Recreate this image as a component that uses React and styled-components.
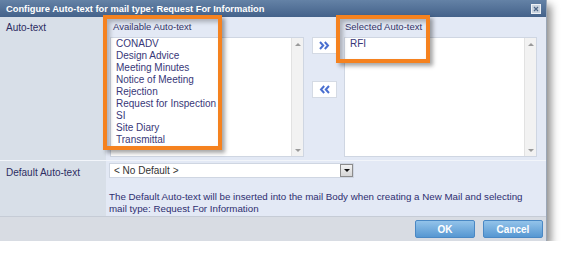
import styled, { createGlobalStyle } from 'styled-components';

const GlobalStyle = createGlobalStyle`
    body {
        margin: 0;
        background: #ffffff;
        font-family: "Liberation Sans", Arial, sans-serif;
    }
`

const Dialog = styled.div`
    width: 546px;
    box-shadow: 4px 5px 8px rgba(0, 0, 0, 0.45);
    border-right: 1px solid #9aa6b6;
    color: #333366;
    font-size: 10px;
`

const TitleBar = styled.div`
    height: 17px;
    display: flex;
    align-items: center;
    justify-content: space-between;
    padding: 0 5px 0 6px;
    background: linear-gradient(#6482a6, #44628a);
    color: #ffffff;
    font-weight: bold;
    font-size: 9.3px;
`

const CloseBox = styled.span`
    display: flex;
    width: 10px;
    height: 10px;
`

const Form = styled.div`
    display: grid;
    grid-template-columns: 106px 1fr;
`

const Label = styled.div`
    background: #d8dfe8;
    padding: ${p => p.$top || 5}px 0 0 6px;
    border-top: ${p => p.$sep ? '1px solid #f2f5fa' : 'none'};
    color: #2d2d62;
`

const Cell = styled.div`
    background: #e3e9f5;
    border-top: ${p => p.$sep ? '1px solid #f2f5fa' : 'none'};
`

const ListsRow = styled.div`
    display: flex;
    align-items: flex-start;
    padding: 0 9px 3px 4px;
    height: 143px;
    box-sizing: border-box;
`

const ListColumn = styled.div`
    position: relative;
    display: flex;
    flex-direction: column;
    width: ${p => p.$w}px;
`

const ListHeader = styled.div`
    height: 20px;
    line-height: 20px;
    padding-left: ${p => p.$pad}px;
    font-size: 9.5px;
`

const ListBox = styled.div`
    height: 120px;
    background: #ffffff;
    border: 1px solid #cfd6e2;
    box-sizing: border-box;
    display: flex;
`

const Items = styled.div`
    flex: 1;
    padding: 0 0 0 5px;
    line-height: 12px;
    color: #383878;
`

const ScrollBar = styled.div`
    width: 11px;
    background: #f2f2f2;
    border-left: 1px solid #e2e2e2;
    display: flex;
    flex-direction: column;
    justify-content: space-between;
    align-items: center;
    padding: 5px 0 4px;
`

const Arrow = styled.span`
    width: 0;
    height: 0;
    border-left: 3px solid transparent;
    border-right: 3px solid transparent;
    ${p => p.$down ? 'border-top: 3px solid #9a9a9a;' : 'border-bottom: 3px solid #9a9a9a;'}
`

const MoveButtons = styled.div`
    display: flex;
    flex-direction: column;
    gap: 27px;
    margin: 20px 7px 0 8px;
`

const MoveButton = styled.button`
    width: 25px;
    height: 17px;
    padding: 0;
    background: #ffffff;
    border: 1px solid #d4dae4;
    display: flex;
    align-items: center;
    justify-content: center;
`

const Highlight = styled.div`
    position: absolute;
    left: ${p => p.$left}px;
    top: -2px;
    width: ${p => p.$w}px;
    height: ${p => p.$h}px;
    border: 4px solid #f5821f;
    box-sizing: border-box;
    box-shadow: 3px 3px 4px rgba(0, 0, 0, 0.35), inset 3px 3px 4px rgba(0, 0, 0, 0.25);
    pointer-events: none;
`

const DefaultRow = styled.div`
    height: 55px;
    padding: 2px 0 0 3px;
    box-sizing: border-box;
`

const Select = styled.div`
    width: 245px;
    height: 15px;
    background: #ffffff;
    border: 1px solid #cfd6e2;
    box-sizing: border-box;
    display: flex;
    align-items: center;
    justify-content: space-between;
    padding-left: 4px;
    color: #333333;
`

const SelectButton = styled.span`
    width: 13px;
    height: 13px;
    box-sizing: border-box;
    background: linear-gradient(#f2f2f2, #d6d6d6);
    border: 1px solid #8c8c8c;
    display: flex;
    align-items: center;
    justify-content: center;
`

const DarkArrow = styled.span`
    width: 0;
    height: 0;
    border-left: 3px solid transparent;
    border-right: 3px solid transparent;
    border-top: 3px solid #111111;
`

const Help = styled.p`
    margin: 13px 0 0;
    line-height: 12px;
    font-size: 9.75px;
    color: #2e2e70;
`

const Footer = styled.div`
    height: 24px;
    background: #d8dce3;
    border-top: 1px solid #c6ccd6;
    display: flex;
    align-items: center;
    justify-content: flex-end;
    gap: 8px;
    padding-right: 3px;
`

const ActionButton = styled.button`
    width: 60px;
    height: 18px;
    padding: 0;
    border: 1px solid #4a88c4;
    border-radius: 2px;
    background: linear-gradient(#93c3ea, #5697d2);
    color: #ffffff;
    font-family: inherit;
    font-weight: bold;
    font-size: 10px;
`

function Chevrons({ left }) {
    return (
        <svg width="11" height="9" viewBox="0 0 11 9">
            <g fill="none" stroke="#4a6fd0" strokeWidth="2" transform={left ? 'translate(11 0) scale(-1 1)' : undefined}>
                <path d="M1 1l3.2 3.5L1 8" />
                <path d="M5.8 1L9 4.5 5.8 8" />
            </g>
        </svg>
    )
}

function List({ items }) {
    return (
        <ListBox>
            <Items>
                {items.map(item => <div key={item}>{item}</div>)}
            </Items>
            <ScrollBar>
                <Arrow />
                <Arrow $down />
            </ScrollBar>
        </ListBox>
    )
}

const available = [
    'CONADV', 'Design Advice', 'Meeting Minutes', 'Notice of Meeting', 'Rejection',
    'Request for Inspection', 'SI', 'Site Diary', 'Transmittal'
]

export default function App() {
    return (
        <>
            <GlobalStyle />
            <Dialog>
                <TitleBar>
                    <span>Configure Auto-text for mail type: Request For Information</span>
                    <CloseBox>
                        <svg width="10" height="10" viewBox="0 0 10 10">
                            <rect x="0.5" y="0.5" width="9" height="9" fill="#c9d3df" stroke="#eef2f7" />
                            <path d="M3 3l4 4M7 3l-4 4" stroke="#4d6688" strokeWidth="1.2" />
                        </svg>
                    </CloseBox>
                </TitleBar>
                <Form>
                    <Label>Auto-text</Label>
                    <Cell>
                        <ListsRow>
                            <ListColumn $w={194}>
                                <ListHeader $pad={3}>Available Auto-text</ListHeader>
                                <List items={available} />
                                <Highlight $left={-7} $w={119} $h={135} />
                            </ListColumn>
                            <MoveButtons>
                                <MoveButton><Chevrons /></MoveButton>
                                <MoveButton><Chevrons left /></MoveButton>
                            </MoveButtons>
                            <ListColumn $w={193}>
                                <ListHeader $pad={1}>Selected Auto-text</ListHeader>
                                <List items={['RFI']} />
                                <Highlight $left={-8} $w={94} $h={48} />
                            </ListColumn>
                        </ListsRow>
                    </Cell>
                    <Label $sep $top={6}>Default Auto-text</Label>
                    <Cell $sep>
                        <DefaultRow>
                            <Select>
                                <span>&lt; No Default &gt;</span>
                                <SelectButton><DarkArrow /></SelectButton>
                            </Select>
                            <Help>
                                The Default Auto-text will be inserted into the mail Body when creating a New Mail and selecting<br />
                                mail type: Request For Information
                            </Help>
                        </DefaultRow>
                    </Cell>
                </Form>
                <Footer>
                    <ActionButton>OK</ActionButton>
                    <ActionButton>Cancel</ActionButton>
                </Footer>
            </Dialog>
        </>
    )
}
